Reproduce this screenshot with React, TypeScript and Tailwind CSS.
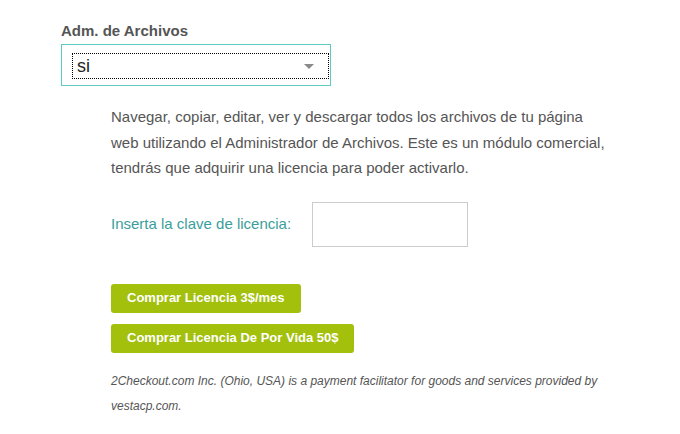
const font = { fontFamily: '"Liberation Sans", Arial, sans-serif' };

function SelectBox() {
  return (
    <div className="mt-[3px] flex h-[42px] w-[270px] border border-[#5ccbc1] pb-[6px] pl-[10px] pr-[1px] pt-[8px]">
      <div className="flex flex-1 items-center justify-between border border-dotted border-black pl-[4px] pr-[14px]">
        <span className="text-[18px] leading-none text-[#222]">si</span>
        <svg width="10" height="6" viewBox="0 0 10 6" className="mt-[1px]">
          <path d="M0 0h10L5 5z" fill="#8a8a8a" />
        </svg>
      </div>
    </div>
  );
}

function BuyButton({ children }: { children: React.ReactNode }) {
  return (
    <button className="flex h-[29px] items-center rounded-[3px] bg-[#a2c00c] px-[16px] text-[13px] font-bold text-white">
      {children}
    </button>
  );
}

export default function App() {
  return (
    <div className="min-h-[434px] w-[680px] bg-white pl-[61px] pt-[21px]" style={font}>
      <div className="text-[15px] font-bold leading-[20px] text-[#555]">Adm. de Archivos</div>
      <SelectBox />

      <div className="ml-[50px]">
        <p className="mt-[18px] text-[15px] leading-[25.5px] text-[#555]">
          Navegar, copiar, editar, ver y descargar todos los archivos de tu página
          <br />
          web utilizando el Administrador de Archivos. Este es un módulo comercial,
          <br />
          tendrás que adquirir una licencia para poder activarlo.
        </p>

        <div className="mt-[21px] flex items-center">
          <label className="w-[201px] text-[15px] text-[#3a9e9b]">Inserta la clave de licencia:</label>
          <input className="h-[45px] w-[156px] border border-[#cccccc] bg-white outline-none" />
        </div>

        <div className="mt-[37px] flex flex-col items-start gap-[11px]">
          <BuyButton>Comprar Licencia 3$/mes</BuyButton>
          <BuyButton>Comprar Licencia De Por Vida 50$</BuyButton>
        </div>

        <p className="mt-[16px] text-[12px] italic leading-[25px] text-[#555]">
          2Checkout.com Inc. (Ohio, USA) is a payment facilitator for goods and services provided by
          <br />
          vestacp.com.
        </p>
      </div>
    </div>
  );
}
